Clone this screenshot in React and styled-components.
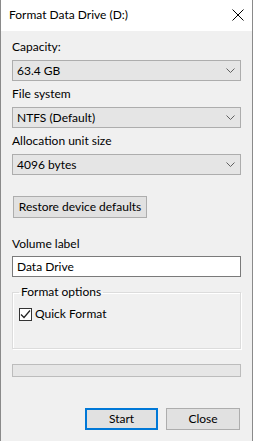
import React from "react";
import styled, { createGlobalStyle } from "styled-components";

const Global = createGlobalStyle`
  html, body { margin: 0; padding: 0; background: #f0f0f0; }
  * { box-sizing: border-box; }
  body { font-family: "Lato", "Noto Sans", sans-serif; font-size: 12px; color: #000; }
`;

const Window = styled.div`
  width: 253px;
  height: 441px;
  border-left: 1px solid #8a8a8a;
  border-right: 1px solid #8a8a8a;
  background: #f0f0f0;
  display: flex;
  flex-direction: column;
  overflow: hidden;
`;

const TitleBar = styled.div`
  height: 31px;
  background: #fff;
  display: flex;
  align-items: center;
  justify-content: space-between;
  padding: 0 8px 1px 8px;
  flex-shrink: 0;
`;

const Title = styled.div`
  font-size: 12px;
  line-height: 16px;
`;

const CloseX = styled.svg`
  width: 12px;
  height: 12px;
`;

const Body = styled.div`
  padding: 8px 11px 0 11px;
  display: flex;
  flex-direction: column;
`;

const Field = styled.div`
  display: flex;
  flex-direction: column;
  gap: ${p => p.$gap || 5}px;
  margin-bottom: ${p => p.$mb || 0}px;
`;

const Label = styled.div`
  line-height: 16px;
  height: 16px;
`;

const Combo = styled.div`
  height: 21px;
  background: #e5e5e5;
  border: 1px solid #adadad;
  display: flex;
  align-items: center;
  justify-content: space-between;
  padding: 0 5px 0 4px;
  line-height: 16px;
`;

const Chevron = styled.svg`
  width: 9px;
  height: 5px;
`;

const Button = styled.button`
  font: inherit;
  font-size: 12px;
  color: #000;
  height: 22px;
  background: #e1e1e1;
  border: 1px solid ${p => (p.$default ? "#0078d7" : "#adadad")};
  box-shadow: ${p => (p.$default ? "inset 0 0 0 1px #0078d7" : "none")};
  padding: 0;
  width: ${p => p.$w}px;
  line-height: 16px;
  margin: 0;
`;

const RestoreRow = styled.div`
  display: flex;
  padding-left: 1px;
  margin: 21px 0 18px;
`;

const TextInput = styled.div`
  height: 21px;
  background: #fff;
  border: 1px solid #7a7a7a;
  display: flex;
  align-items: center;
  padding: 0 4px;
  line-height: 16px;
`;

const Group = styled.fieldset`
  margin: 7px 0 0;
  padding: 0 6px 0 6px;
  border: 1px solid #dcdcdc;
  box-shadow: inset 1px 1px 0 #fff, 1px 1px 0 #fff;
  height: 65px;
`;

const Legend = styled.legend`
  padding: 0 2px;
  line-height: 16px;
`;

const CheckRow = styled.label`
  display: flex;
  align-items: center;
  gap: 3px;
  margin-top: 6px;
  line-height: 16px;
`;

const CheckBox = styled.span`
  width: 13px;
  height: 13px;
  background: #fff;
  border: 1px solid #333;
  display: flex;
  align-items: center;
  justify-content: center;
`;

const Progress = styled.div`
  height: 13px;
  margin-top: 15px;
  background: #e6e6e6;
  border: 1px solid #bcbcbc;
`;

const Footer = styled.div`
  display: flex;
  justify-content: flex-end;
  gap: 8px;
  margin-top: 31px;
  padding-right: 1px;
`;

const ChevronIcon = () => (
  <Chevron viewBox="0 0 9 5">
    <polyline points="0.5,0.5 4.5,4.5 8.5,0.5" fill="none" stroke="#606060" strokeWidth="1" />
  </Chevron>
);

export default function App() {
  return (
    <>
      <Global />
      <Window>
        <TitleBar>
          <Title>Format Data Drive (D:)</Title>
          <CloseX viewBox="0 0 12 12">
            <line x1="0.5" y1="0.5" x2="11.5" y2="11.5" stroke="#000" strokeWidth="1" />
            <line x1="11.5" y1="0.5" x2="0.5" y2="11.5" stroke="#000" strokeWidth="1" />
          </CloseX>
        </TitleBar>
        <Body>
          <Field $mb={5}>
            <Label>Capacity:</Label>
            <Combo>
              <span>63.4 GB</span>
              <ChevronIcon />
            </Combo>
          </Field>
          <Field $mb={5}>
            <Label>File system</Label>
            <Combo>
              <span>NTFS (Default)</span>
              <ChevronIcon />
            </Combo>
          </Field>
          <Field>
            <Label>Allocation unit size</Label>
            <Combo>
              <span>4096 bytes</span>
              <ChevronIcon />
            </Combo>
          </Field>
          <RestoreRow>
            <Button $w={134}>Restore device defaults</Button>
          </RestoreRow>
          <Field $gap={4}>
            <Label>Volume label</Label>
            <TextInput>Data Drive</TextInput>
          </Field>
          <Group>
            <Legend>Format options</Legend>
            <CheckRow>
              <CheckBox>
                <svg width="11" height="11" viewBox="0 0 11 11">
                  <polyline points="1,5.5 4,8.5 10,1.5" fill="none" stroke="#222" strokeWidth="1.2" />
                </svg>
              </CheckBox>
              <span>Quick Format</span>
            </CheckRow>
          </Group>
          <Progress />
          <Footer>
            <Button $default $w={73}>Start</Button>
            <Button $w={74}>Close</Button>
          </Footer>
        </Body>
      </Window>
    </>
  );
}
